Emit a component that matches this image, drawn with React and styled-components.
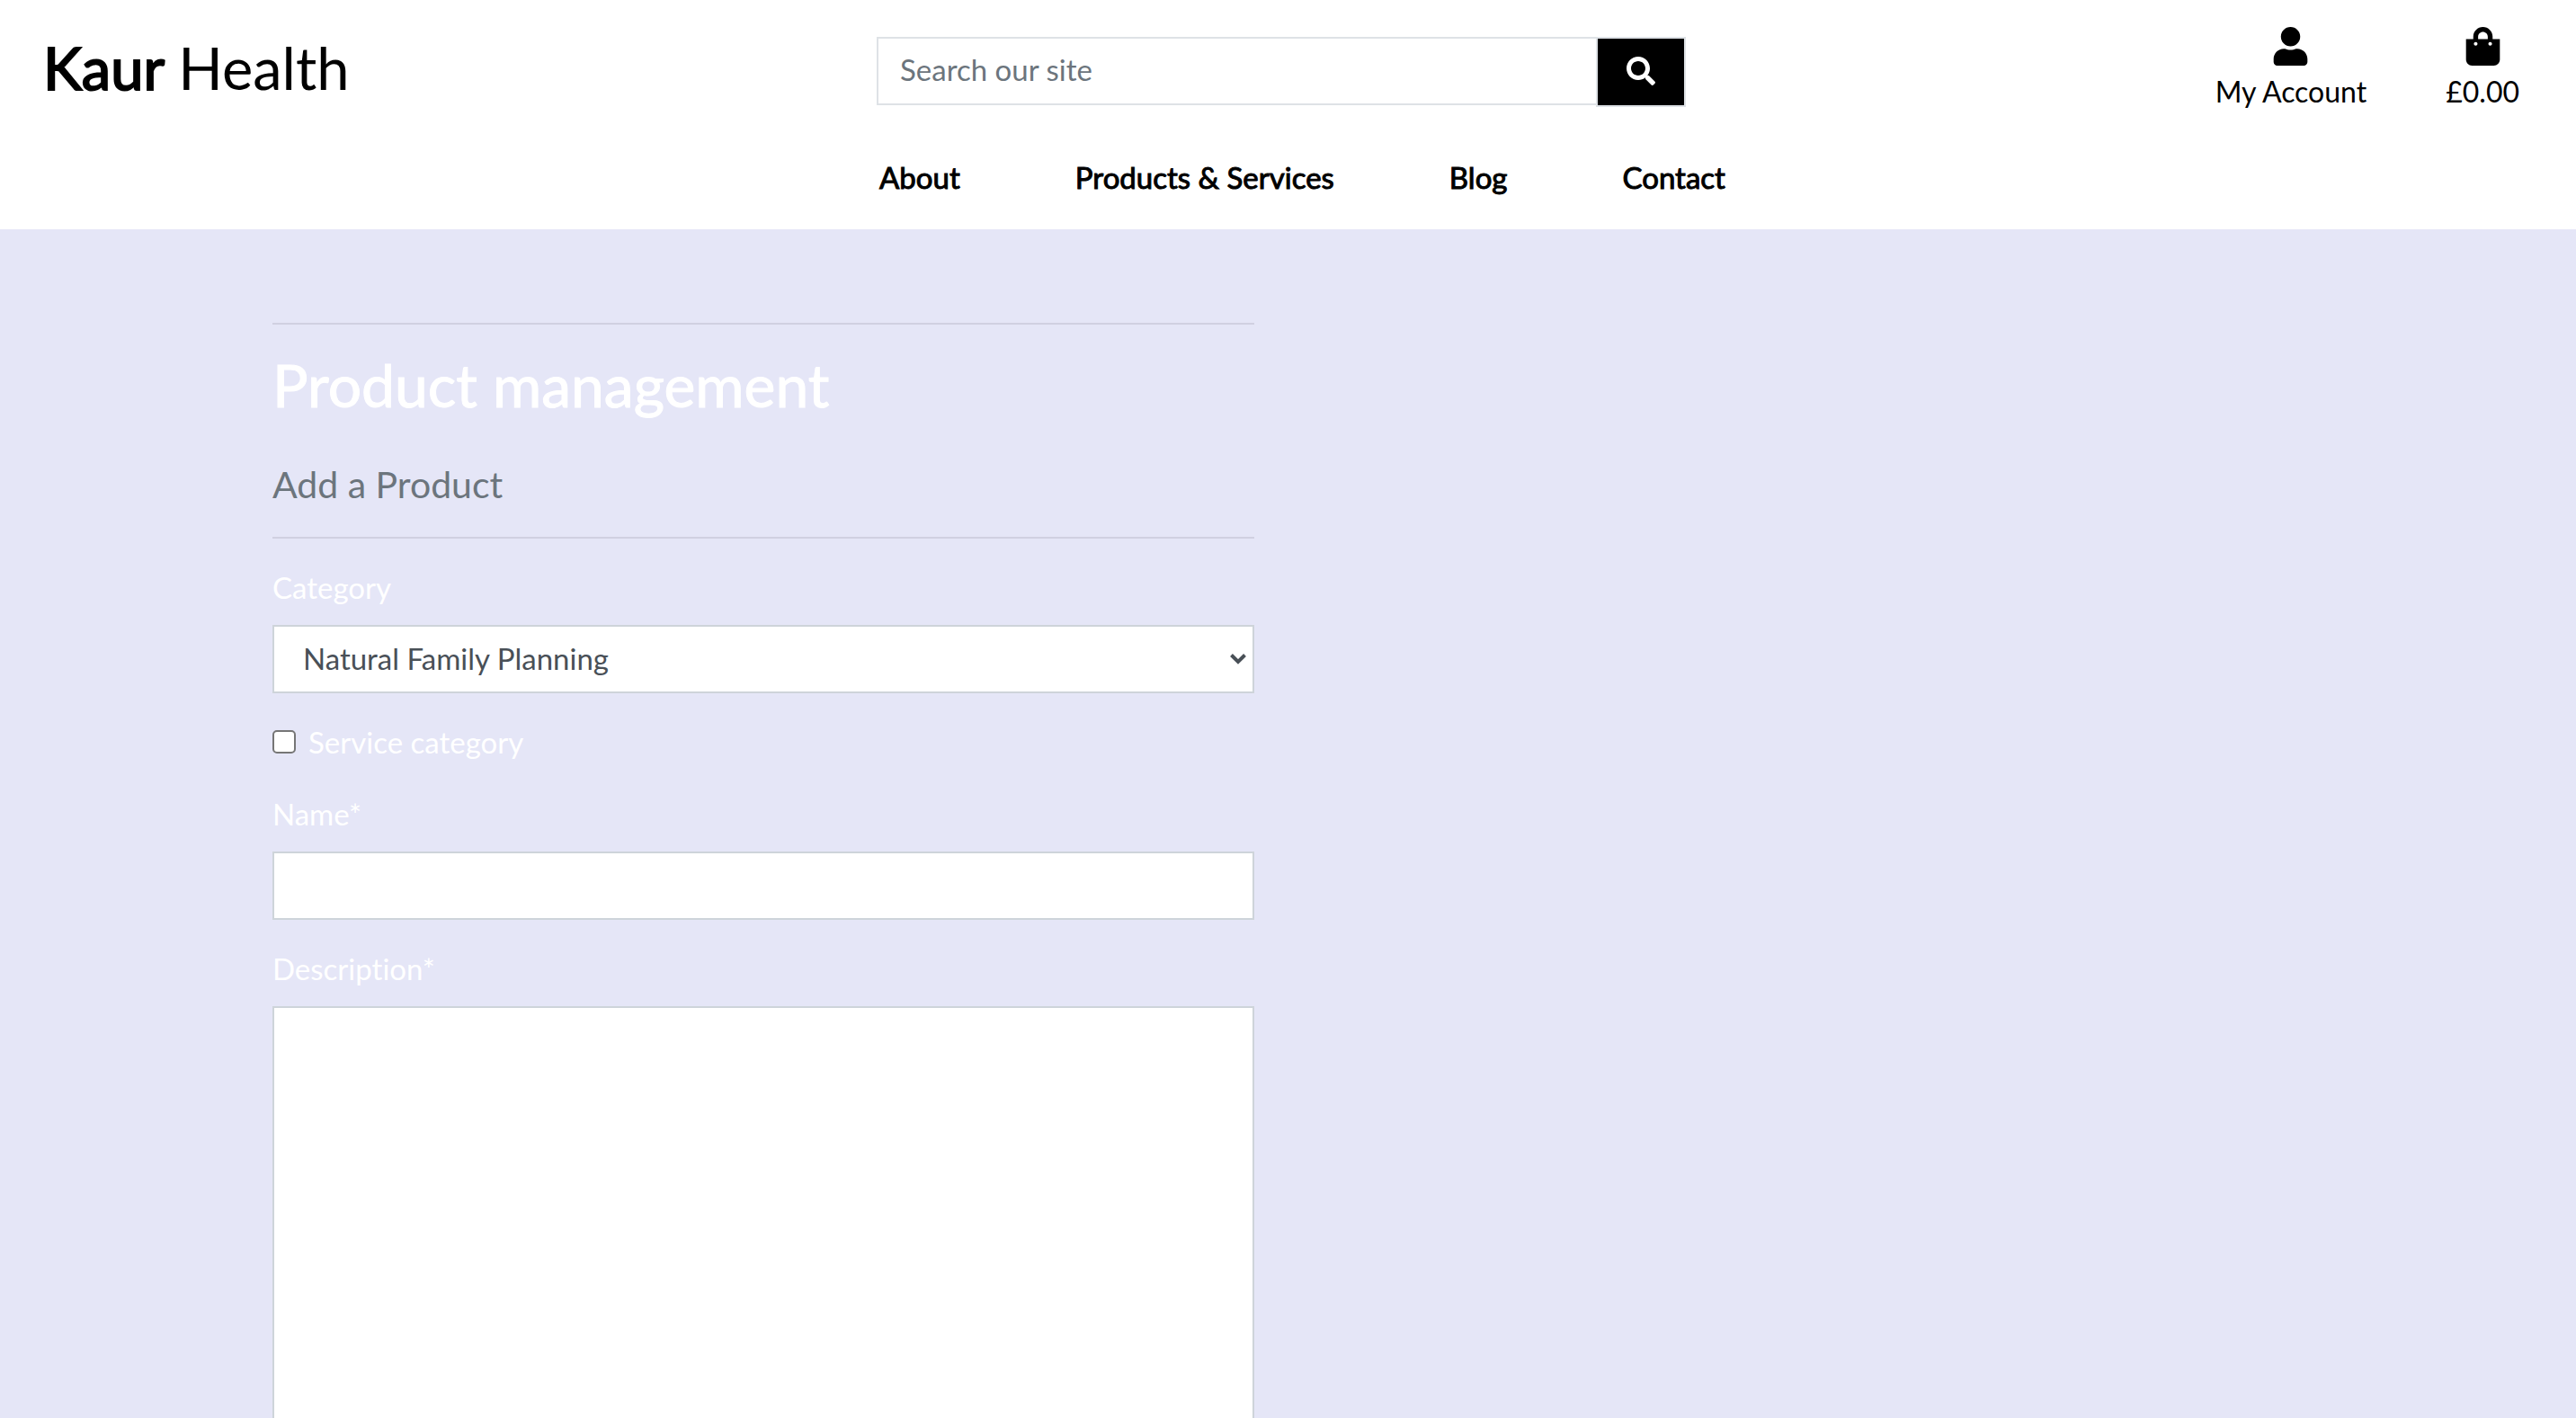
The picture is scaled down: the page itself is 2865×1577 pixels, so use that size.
import React from "react";
import styled, { createGlobalStyle } from "styled-components";
import { FaSearch, FaShoppingBag, FaUser } from "react-icons/fa";

const GlobalStyle = createGlobalStyle`
  *, *::before, *::after {
    box-sizing: border-box;
  }

  body {
    margin: 0;
    font-family: Lato, "Open Sans", sans-serif;
    font-size: 33px;
    line-height: 48px;
    font-variant-ligatures: none;
    color: #000;
    background: #e5e6f7;
  }
`;

const Page = styled.div`
  display: flex;
  flex-direction: column;
  height: 100vh;
  overflow: hidden;
`;

const Header = styled.header`
  flex: none;
  background: #fff;
`;

const TopBar = styled.div`
  display: grid;
  grid-template-columns: repeat(3, 1fr);
  align-items: start;
`;

const Logo = styled.a`
  padding: 37px 48px 0;
  font-size: 65px;
  line-height: 77px;
  color: inherit;
  text-decoration: none;
`;

const LogoStrong = styled.span`
  -webkit-text-stroke: 2px currentColor;
`;

const SearchForm = styled.form`
  display: flex;
  align-items: flex-start;
  margin-top: 41px;
  padding: 0 35px 0 20px;
`;

const SearchInput = styled.input`
  flex: 1;
  min-width: 0;
  height: 76px;
  padding: 0 24px 4px;
  border: 2px solid #dee2e6;
  border-right: 0;
  border-radius: 0;
  font: inherit;
  color: #495057;
  background: #fff;

  &::placeholder {
    color: #6c757d;
    opacity: 1;
  }
`;

const SearchButton = styled.button`
  display: flex;
  align-items: center;
  justify-content: center;
  width: 100px;
  height: 78px;
  padding: 0 0 2px;
  border: 2px solid #dee2e6;
  color: #fff;
  background: #000;
  font-size: 32px;
`;

const Tools = styled.ul`
  display: flex;
  justify-content: flex-end;
  gap: 88px;
  margin: 0;
  padding: 30px 63px 0 0;
  list-style: none;
  font-size: 32px;
`;

const ToolLink = styled.a`
  display: flex;
  flex-direction: column;
  align-items: center;
  gap: 5px;
  color: inherit;
  text-decoration: none;

  svg {
    font-size: 43px;
  }
`;

const Nav = styled.nav`
  display: flex;
  justify-content: center;
  gap: 128px;
  padding: 47px 0 34px 32px;
`;

const NavLink = styled.a`
  color: inherit;
  text-decoration: none;
  -webkit-text-stroke: 1px currentColor;
`;

const Main = styled.main`
  display: grid;
  grid-template-columns: 1fr 1fr;
  column-gap: 75px;
  width: 100%;
  max-width: 2259px;
  margin: 0 auto;
  padding-top: 104px;
  color: #fff;
`;

const Column = styled.div`
  min-width: 0;
`;

const Rule = styled.hr`
  height: 2px;
  margin: 0;
  border: 0;
  background: #d0d0e1;
`;

const Title = styled.h2`
  margin: 28px 0 49px;
  font-size: 66px;
  line-height: 77px;
  font-weight: 400;
  -webkit-text-stroke: 1px currentColor;
`;

const Subtitle = styled.h5`
  margin: 0 0 34px;
  font-size: 41px;
  line-height: 48px;
  font-weight: 400;
  color: #6c757d;
`;

const Form = styled.form`
  padding-top: 30px;
`;

const Group = styled.div`
  margin-bottom: 30px;
`;

const Label = styled.label`
  display: block;
  margin-bottom: 18px;
`;

const TextInput = styled.input`
  display: block;
  width: 100%;
  height: 76px;
  padding: 0 24px;
  border: 2px solid #ced4da;
  border-radius: 0;
  font: inherit;
  color: #495057;
  background: #fff;
`;

const TextArea = styled.textarea`
  display: block;
  width: 100%;
  height: 508px;
  padding: 12px 24px;
  border: 2px solid #ced4da;
  border-radius: 0;
  font: inherit;
  color: #495057;
  background: #fff;
  resize: none;
`;

const SelectBox = styled.div`
  display: grid;
  align-items: center;

  > * {
    grid-area: 1 / 1;
  }
`;

const Select = styled.select`
  width: 100%;
  height: 76px;
  padding: 0 32px 2px;
  border: 2px solid #ced4da;
  border-radius: 0;
  appearance: none;
  font: inherit;
  color: #495057;
  background: #fff;
`;

const Arrow = styled.svg`
  justify-self: end;
  width: 20px;
  height: 14px;
  margin-right: 8px;
  pointer-events: none;
`;

const CheckRow = styled.div`
  display: flex;
  align-items: center;
  gap: 14px;
  height: 48px;
  margin-bottom: 32px;
`;

const Checkbox = styled.input`
  width: 26px;
  height: 26px;
  margin: 0;
  border: 2px solid #767676;
  border-radius: 5px;
  appearance: none;
  background: #fff;

  &:checked {
    background: #0075ff;
  }
`;

const NAV_ITEMS = ["About", "Products & Services", "Blog", "Contact"];

export default function App() {
  return (
    <>
      <GlobalStyle />
      <Page>
        <Header>
          <TopBar>
            <Logo href="#home">
              <LogoStrong>Kaur</LogoStrong> Health
            </Logo>
            <SearchForm role="search">
              <SearchInput type="text" placeholder="Search our site" aria-label="Search our site" />
              <SearchButton type="submit" aria-label="Search">
                <FaSearch />
              </SearchButton>
            </SearchForm>
            <Tools>
              <li>
                <ToolLink href="#account">
                  <FaUser />
                  My Account
                </ToolLink>
              </li>
              <li>
                <ToolLink href="#bag">
                  <FaShoppingBag />
                  £0.00
                </ToolLink>
              </li>
            </Tools>
          </TopBar>
          <Nav>
            {NAV_ITEMS.map((item) => (
              <NavLink key={item} href="#nav">
                {item}
              </NavLink>
            ))}
          </Nav>
        </Header>
        <Main>
          <Column>
            <Rule />
            <Title>Product management</Title>
            <Subtitle>Add a Product</Subtitle>
            <Rule />
            <Form>
              <Group>
                <Label htmlFor="category">Category</Label>
                <SelectBox>
                  <Select id="category" defaultValue="nfp">
                    <option value="nfp">Natural Family Planning</option>
                  </Select>
                  <Arrow viewBox="0 0 20 14" aria-hidden="true">
                    <path d="M2.5 2.5 10 10l7.5-7.5" fill="none" stroke="#495057" strokeWidth="4" />
                  </Arrow>
                </SelectBox>
              </Group>
              <CheckRow>
                <Checkbox type="checkbox" id="service" />
                <label htmlFor="service">Service category</label>
              </CheckRow>
              <Group>
                <Label htmlFor="name">Name*</Label>
                <TextInput type="text" id="name" />
              </Group>
              <Group>
                <Label htmlFor="description">Description*</Label>
                <TextArea id="description" />
              </Group>
            </Form>
          </Column>
        </Main>
      </Page>
    </>
  );
}
